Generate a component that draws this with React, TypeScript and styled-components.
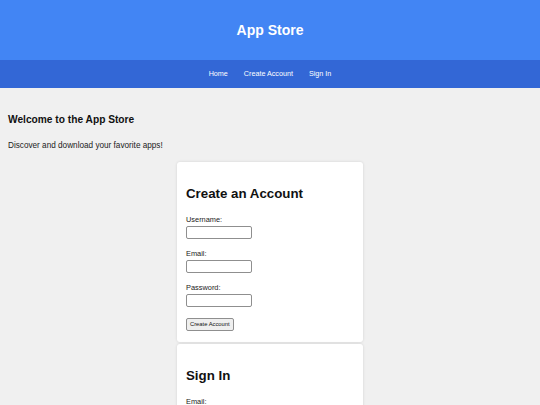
import React from "react";
import styled, { createGlobalStyle } from "styled-components";

const Global = createGlobalStyle`
  html, body { margin: 0; padding: 0; background: #f0f0f0; }
  body { font-family: "Liberation Sans", Arial, Helvetica, sans-serif; color: #111; }
  * { box-sizing: border-box; }
`;

const Header = styled.header`
  height: 60px;
  background: #4285f4;
  display: flex;
  align-items: center;
  justify-content: center;
`;

const Title = styled.h1`
  margin: 0;
  color: #fff;
  font-size: 14px;
  line-height: 20px;
  font-weight: 700;
`;

const Nav = styled.nav`
  height: 28px;
  background: #3367d6;
  display: flex;
  align-items: center;
  justify-content: center;
  gap: 16px;
`;

const NavLink = styled.a`
  color: #fff;
  font-size: 7.2px;
  line-height: 10px;
  text-decoration: none;
`;

const Main = styled.main`
  padding: 0 8px;
  display: flex;
  flex-direction: column;
`;

const Heading = styled.h2`
  margin: 24px 0 0 0;
  font-size: 10.2px;
  line-height: 15px;
  font-weight: 700;
  color: #111;
`;

const Lead = styled.p`
  margin: 13px 0 0 0;
  font-size: 8.2px;
  line-height: 11px;
  color: #222;
`;

const Card = styled.section<{ $first?: boolean }>`
  width: 186px;
  margin: ${(p) => (p.$first ? "11px" : "2px")} auto 0 auto;
  background: #fff;
  border-radius: 3px;
  box-shadow: 0 0 3px rgba(0, 0, 0, 0.12);
  padding: 9px 9px 11px 9px;
`;

const CardTitle = styled.h2`
  margin: 14px 0 13px 0;
  font-size: 13.3px;
  line-height: 17px;
  font-weight: 700;
  color: #111;
`;

const Field = styled.div`
  margin-bottom: 10px;
`;

const Label = styled.label`
  display: block;
  font-size: 7.4px;
  line-height: 10px;
  color: #222;
  margin-bottom: 1px;
`;

const Input = styled.input`
  display: block;
  width: 66px;
  height: 13px;
  padding: 0 2px;
  border: 1px solid #8f8f8f;
  border-radius: 2px;
  background: #fff;
  font-size: 7px;
`;

const Button = styled.button`
  display: block;
  margin-top: 11px;
  height: 13px;
  padding: 0 3px;
  font-family: inherit;
  font-size: 5.8px;
  line-height: 11px;
  color: #111;
  background: #efefef;
  border: 1px solid #8f8f8f;
  border-radius: 2px;
`;

export default function App() {
  return (
    <>
      <Global />
      <Header>
        <Title>App Store</Title>
      </Header>
      <Nav>
        <NavLink href="#">Home</NavLink>
        <NavLink href="#">Create Account</NavLink>
        <NavLink href="#">Sign In</NavLink>
      </Nav>
      <Main>
        <Heading>Welcome to the App Store</Heading>
        <Lead>Discover and download your favorite apps!</Lead>
        <Card $first>
          <CardTitle>Create an Account</CardTitle>
          <Field>
            <Label>Username:</Label>
            <Input type="text" />
          </Field>
          <Field>
            <Label>Email:</Label>
            <Input type="email" />
          </Field>
          <Field>
            <Label>Password:</Label>
            <Input type="password" />
          </Field>
          <Button>Create Account</Button>
        </Card>
        <Card>
          <CardTitle>Sign In</CardTitle>
          <Field>
            <Label>Email:</Label>
            <Input type="email" />
          </Field>
          <Field>
            <Label>Password:</Label>
            <Input type="password" />
          </Field>
          <Button>Sign In</Button>
        </Card>
      </Main>
    </>
  );
}
